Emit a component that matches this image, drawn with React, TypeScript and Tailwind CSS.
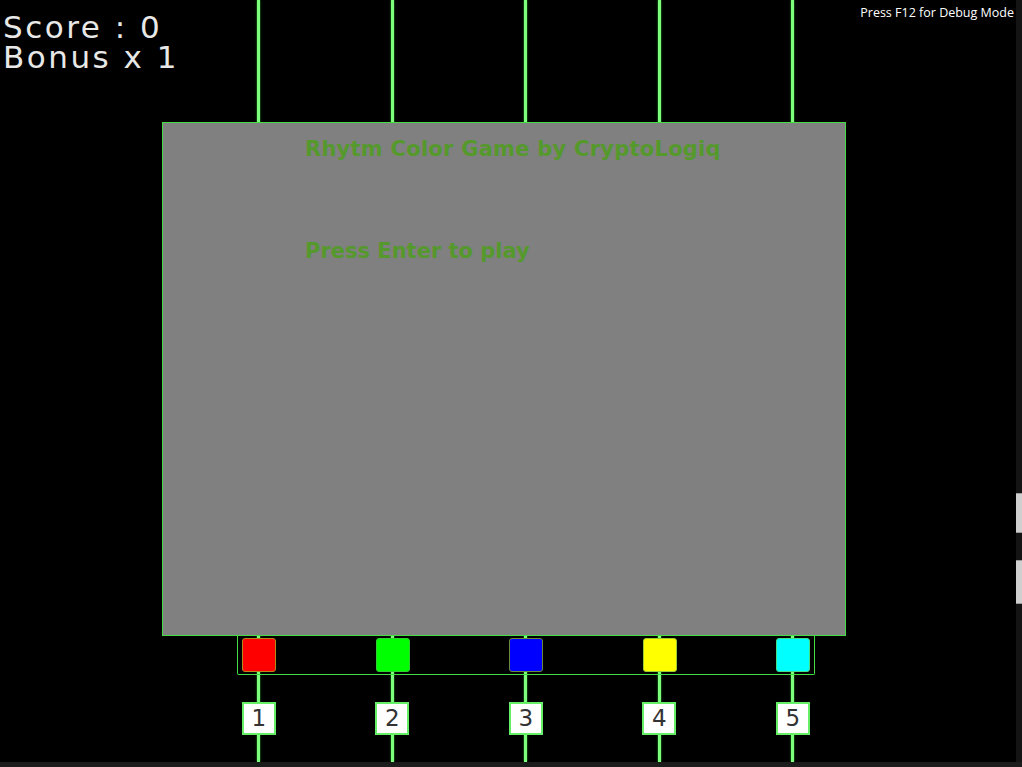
import React from 'react';

const lanes = [
  { color: 'bg-[#ff0000]', edge: 'border-[#b08a1a]', key: '1' },
  { color: 'bg-[#00ff00]', edge: 'border-[#33cc33]', key: '2' },
  { color: 'bg-[#0000ff]', edge: 'border-[#6a8a3a]', key: '3' },
  { color: 'bg-[#ffff00]', edge: 'border-[#9acc33]', key: '4' },
  { color: 'bg-[#00ffff]', edge: 'border-[#44dd88]', key: '5' },
];

export default function App() {
  return (
    <div className="relative w-[1022px] h-[767px] overflow-hidden bg-black font-['DejaVu_Sans',sans-serif]">
      {/* Lane lines (behind everything) */}
      <div className="absolute inset-0 grid grid-cols-[repeat(5,133.5px)] pl-[192px]">
        {lanes.map((l) => (
          <div key={'line' + l.key} className="flex justify-center">
            <div className="h-[762px] w-[3px] bg-[#7dff7d] shadow-[0_0_2px_#33cc33]" />
          </div>
        ))}
      </div>

      {/* Foreground */}
      <div className="relative flex flex-col">
        {/* HUD */}
        <div className="h-[122px] flex justify-between items-start">
          <div className="pl-[3px] pt-[12px] text-[31px] leading-[30px] tracking-[2.5px] text-[#e8e8e8] whitespace-pre-line">
            {'Score : 0\nBonus x 1'}
          </div>
          <div className="pr-[8px] pt-[4px] text-[12.5px] text-white font-['Open_Sans',sans-serif]">
            Press F12 for Debug Mode
          </div>
        </div>

        {/* Main panel */}
        <div className="ml-[162px] w-[684px] h-[514px] bg-[#808080] border border-[#44dd44] pl-[142px] pt-[11px] flex flex-col gap-[70px] text-[21px] font-bold tracking-[0.25px] text-[#55992c]">
          <div>Rhytm Color Game by CryptoLogiq</div>
          <div className="tracking-[0px]">Press Enter to play</div>
        </div>

        {/* Receiver strip */}
        <div className="-mt-px ml-[237px] w-[578px] h-[40px] border border-t-0 border-[#44dd44] rounded-b-[2px] flex justify-between items-start px-[4px] pt-[3px]">
          {lanes.map((l) => (
            <div key={'pad' + l.key} className={`w-[34px] h-[34px] rounded-[3px] border ${l.color} ${l.edge}`} />
          ))}
        </div>

        {/* Key labels */}
        <div className="mt-[27px] grid grid-cols-[repeat(5,133.5px)] pl-[192px]">
          {lanes.map((l) => (
            <div key={'num' + l.key} className="flex justify-center">
              <div className="w-[34px] h-[33px] flex items-center justify-center bg-white border-2 border-[#66ee66] text-[23px] text-[#333]">
                {l.key}
              </div>
            </div>
          ))}
        </div>
      </div>

      {/* right edge scroll stubs */}
      <div className="absolute right-0 top-0 w-[6px] h-full bg-[#141414]">
        <div className="mt-[493px] h-[40px] bg-[#cfcfcf] border-y border-[#999]" />
        <div className="mt-[27px] h-[44px] bg-[#cfcfcf] border-y border-[#999]" />
      </div>

      {/* bottom strip */}
      <div className="absolute left-0 bottom-0 w-full h-[5px] bg-[#1c1c1c]" />
    </div>
  );
}
